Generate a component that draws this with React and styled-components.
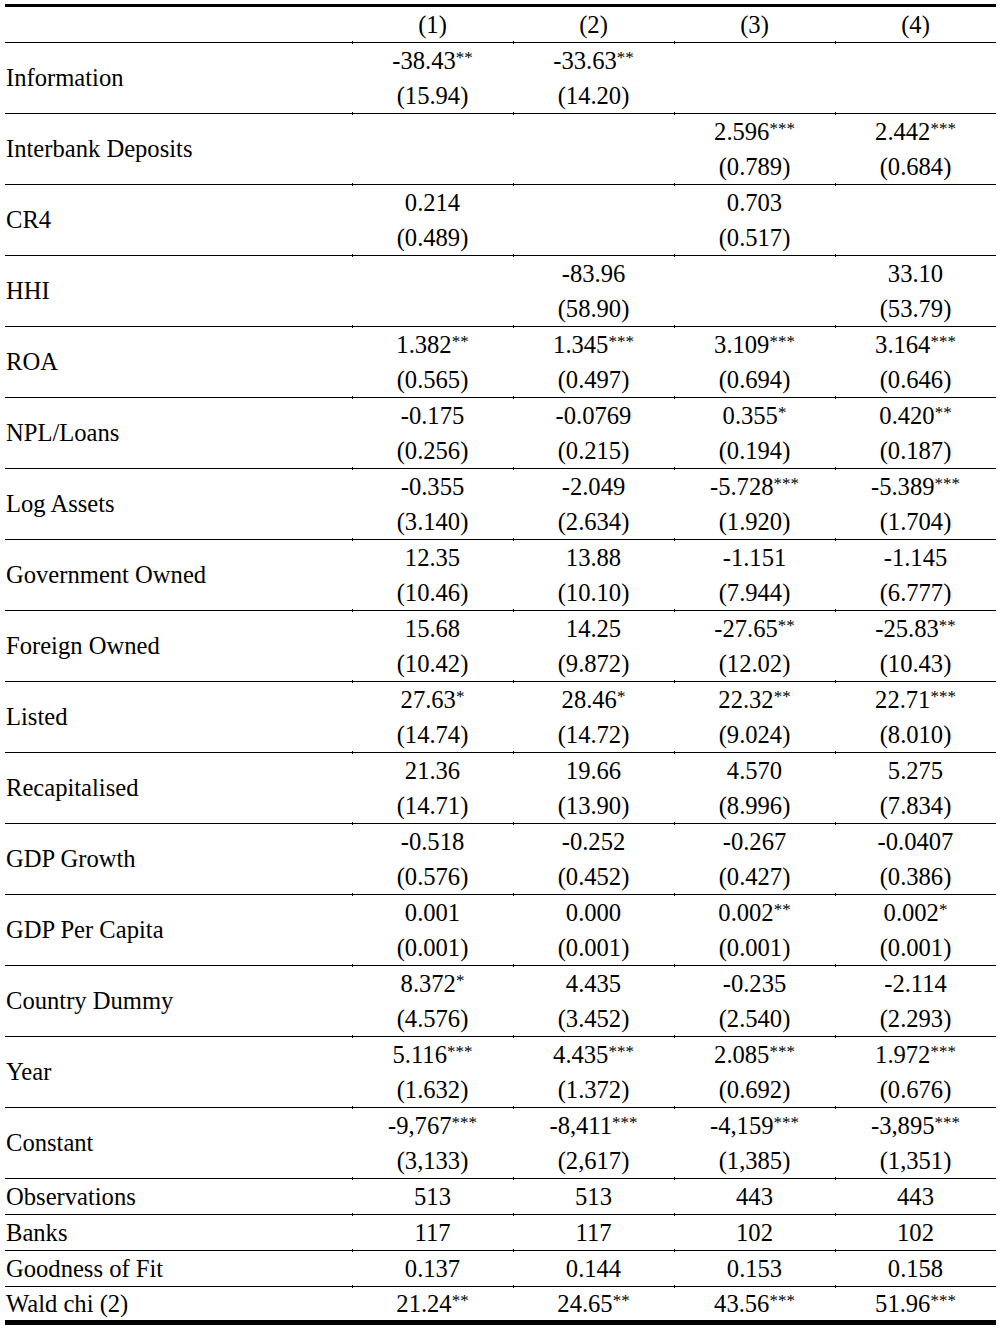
import styled, { createGlobalStyle } from "styled-components";

const GlobalStyle = createGlobalStyle`
  html, body {
    margin: 0;
    padding: 0;
    background: #fff;
  }
  body {
    font-family: "Liberation Serif", "Times New Roman", serif;
    color: #000;
  }
`;

const Page = styled.div`
  padding: 4px 0 0 5px;
`;

const Table = styled.div`
  width: 991px;
  display: flex;
  flex-direction: column;
  border-top: 3px solid #000;
  border-bottom: 5px solid #000;
  font-size: 24.6px;
`;

const Row = styled.div`
  display: grid;
  grid-template-columns: 347px repeat(4, 161px);
  height: ${(p) => p.$height}px;
  border-bottom: ${(p) => (p.$last ? "none" : "1px solid #000")};
`;

const Label = styled.div`
  display: flex;
  align-items: center;
  padding-left: 1px;
  white-space: nowrap;
`;

const Cell = styled.div`
  position: relative;
  display: flex;
  flex-direction: column;
  align-items: center;
  justify-content: center;

  &::before {
    content: "";
    display: ${(p) => (p.$tick ? "block" : "none")};
    position: absolute;
    left: 0;
    bottom: -2px;
    width: 1px;
    height: 3px;
    background: #000;
  }
`;

const Line = styled.div`
  height: ${(p) => p.$height}px;
  line-height: ${(p) => p.$height}px;
  white-space: nowrap;
`;

const Stars = styled.sup`
  font-size: 17px;
  line-height: 0;
  vertical-align: 6px;
`;

const rows = [
  ["Information", ["-38.43", "**", "(15.94)"], ["-33.63", "**", "(14.20)"], null, null],
  ["Interbank Deposits", null, null, ["2.596", "***", "(0.789)"], ["2.442", "***", "(0.684)"]],
  ["CR4", ["0.214", "", "(0.489)"], null, ["0.703", "", "(0.517)"], null],
  ["HHI", null, ["-83.96", "", "(58.90)"], null, ["33.10", "", "(53.79)"]],
  ["ROA", ["1.382", "**", "(0.565)"], ["1.345", "***", "(0.497)"], ["3.109", "***", "(0.694)"], ["3.164", "***", "(0.646)"]],
  ["NPL/Loans", ["-0.175", "", "(0.256)"], ["-0.0769", "", "(0.215)"], ["0.355", "*", "(0.194)"], ["0.420", "**", "(0.187)"]],
  ["Log Assets", ["-0.355", "", "(3.140)"], ["-2.049", "", "(2.634)"], ["-5.728", "***", "(1.920)"], ["-5.389", "***", "(1.704)"]],
  ["Government Owned", ["12.35", "", "(10.46)"], ["13.88", "", "(10.10)"], ["-1.151", "", "(7.944)"], ["-1.145", "", "(6.777)"]],
  ["Foreign Owned", ["15.68", "", "(10.42)"], ["14.25", "", "(9.872)"], ["-27.65", "**", "(12.02)"], ["-25.83", "**", "(10.43)"]],
  ["Listed", ["27.63", "*", "(14.74)"], ["28.46", "*", "(14.72)"], ["22.32", "**", "(9.024)"], ["22.71", "***", "(8.010)"]],
  ["Recapitalised", ["21.36", "", "(14.71)"], ["19.66", "", "(13.90)"], ["4.570", "", "(8.996)"], ["5.275", "", "(7.834)"]],
  ["GDP Growth", ["-0.518", "", "(0.576)"], ["-0.252", "", "(0.452)"], ["-0.267", "", "(0.427)"], ["-0.0407", "", "(0.386)"]],
  ["GDP Per Capita", ["0.001", "", "(0.001)"], ["0.000", "", "(0.001)"], ["0.002", "**", "(0.001)"], ["0.002", "*", "(0.001)"]],
  ["Country Dummy", ["8.372", "*", "(4.576)"], ["4.435", "", "(3.452)"], ["-0.235", "", "(2.540)"], ["-2.114", "", "(2.293)"]],
  ["Year", ["5.116", "***", "(1.632)"], ["4.435", "***", "(1.372)"], ["2.085", "***", "(0.692)"], ["1.972", "***", "(0.676)"]],
  ["Constant", ["-9,767", "***", "(3,133)"], ["-8,411", "***", "(2,617)"], ["-4,159", "***", "(1,385)"], ["-3,895", "***", "(1,351)"]],
];

const stats = [
  ["Observations", ["513", ""], ["513", ""], ["443", ""], ["443", ""]],
  ["Banks", ["117", ""], ["117", ""], ["102", ""], ["102", ""]],
  ["Goodness of Fit", ["0.137", ""], ["0.144", ""], ["0.153", ""], ["0.158", ""]],
  ["Wald chi (2)", ["21.24", "**"], ["24.65", "**"], ["43.56", "***"], ["51.96", "***"]],
];

const Value = ({ value, stars }) => (
  <>
    {value}
    {stars && <Stars>{stars}</Stars>}
  </>
);

export default function App() {
  return (
    <Page>
      <GlobalStyle />
      <Table>
        <Row $height={35}>
          <Label />
          {["(1)", "(2)", "(3)", "(4)"].map((h) => (
            <Cell key={h} $tick>
              <Line $height={35}>{h}</Line>
            </Cell>
          ))}
        </Row>

        {rows.map(([label, ...cols]) => (
          <Row key={label} $height={70}>
            <Label>{label}</Label>
            {cols.map((c, i) => (
              <Cell key={i} $tick>
                {c && (
                  <>
                    <Line $height={35}>
                      <Value value={c[0]} stars={c[1]} />
                    </Line>
                    <Line $height={35}>{c[2]}</Line>
                  </>
                )}
              </Cell>
            ))}
          </Row>
        ))}

        {stats.map(([label, ...cols], idx) => {
          const last = idx === stats.length - 1;
          return (
            <Row key={label} $height={last ? 33 : 35} $last={last}>
              <Label>{label}</Label>
              {cols.map((c, i) => (
                <Cell key={i} $tick={!last}>
                  <Line $height={last ? 33 : 35}>
                    <Value value={c[0]} stars={c[1]} />
                  </Line>
                </Cell>
              ))}
            </Row>
          );
        })}
      </Table>
    </Page>
  );
}
